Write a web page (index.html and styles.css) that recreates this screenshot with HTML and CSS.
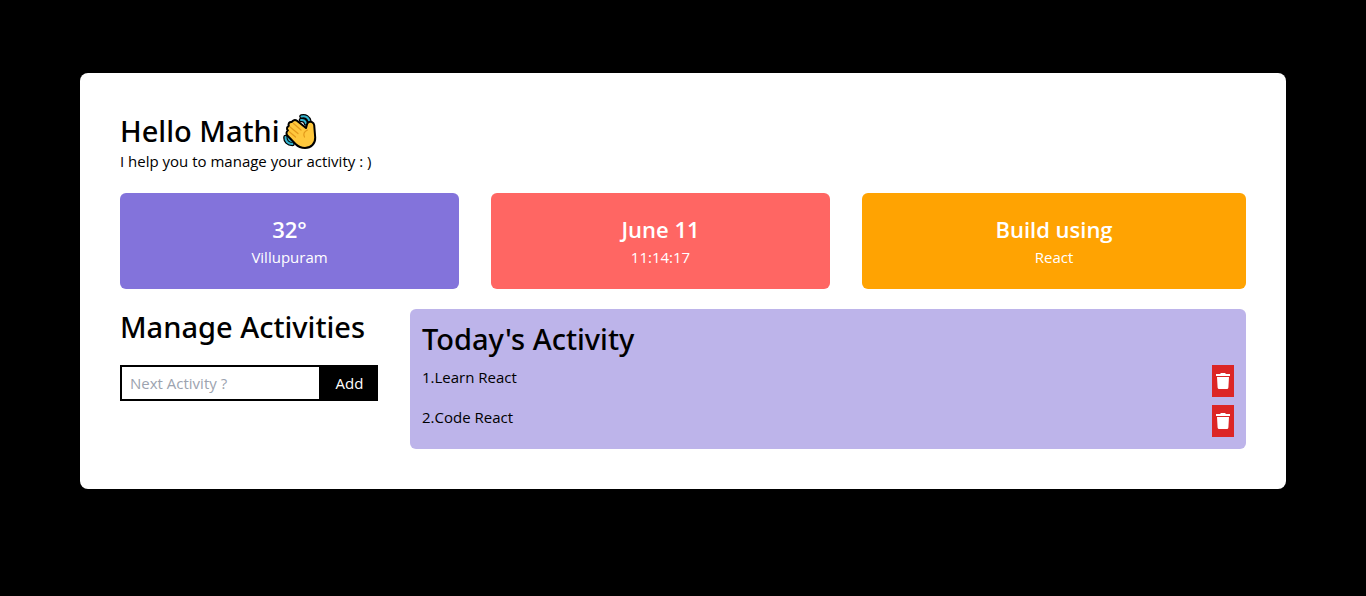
FILE: index.html
```
<!DOCTYPE html>
<html lang="en">
<head>
<meta charset="utf-8">
<meta name="viewport" content="width=device-width, initial-scale=1">
<title>Activity Manager</title>
<link rel="stylesheet" href="styles.css">
</head>
<body>
<svg class="sprite" aria-hidden="true">
  <symbol id="trash" viewBox="0 0 14 16">
    <path fill="currentColor" d="M0 1h4l1-1h4l1 1h4v2H0zM1 4h12l-.6 10.500q-.1 1.500-1.500 1.500H3.100q-1.400 0-1.500-1.500z"/>
  </symbol>
</svg>
<main class="app">
  <header>
    <h1 class="title">Hello Mathi<svg class="wave" viewBox="0 0 34 36" role="img" aria-label="waving hand">
      <g fill="none" stroke-linecap="round" stroke-linejoin="round">
        <path stroke="#000" stroke-width="4.500" d="M18.500 3.500c4-1 7 1 8 5M18 7c2.500-.5 4.500 1 5 3.500M2.500 24c-.5 4 2.500 7 7 7M5.500 24c0 2.500 1.500 4 4.500 4.500"/>
        <path stroke="#35b5d0" stroke-width="2" d="M18.500 3.500c4-1 7 1 8 5M18 7c2.500-.5 4.500 1 5 3.500M2.500 24c-.5 4 2.500 7 7 7M5.500 24c0 2.500 1.500 4 4.500 4.500"/>
      </g>
      <path fill="#ffc83d" stroke="#000" stroke-width="2" stroke-linejoin="round" d="M5 17.500c-2-2-.8-4 .8-4.500-1-2.500.7-4.500 3-4 .7-2 3.500-2.500 5.200-1.300L23 15c1-2.500.5-4.500 2.500-5.800 2.200-1.200 5.300.2 5.700 3l1 12.300c.3 6-4.200 10.500-10.200 10.500-4 0-7-1.500-9.500-4L4.800 23c-1.800-1.700-1.800-4.300.2-5.500z"/>
      <path fill="none" stroke="#e39a1c" stroke-width="1.200" stroke-linecap="round" d="M6 18.500l6.500 5.500M7 14l8 6.500M10.500 10.500l7.500 6.500M24.500 17c-3.500 1.500-4.500 4-3 7"/>
    </svg></h1>
    <p class="subtitle">I help you to manage your activity : )</p>
  </header>

  <section class="cards">
    <article class="card card-weather"><h2>32°</h2><p>Villupuram</p></article>
    <article class="card card-date"><h2>June 11</h2><p>11:14:17</p></article>
    <article class="card card-stack"><h2>Build using</h2><p>React</p></article>
  </section>

  <div class="columns">
    <section class="manage">
      <h2 class="title">Manage Activities</h2>
      <form class="add-form">
        <input class="add-input" type="text" placeholder="Next Activity ?" aria-label="Next activity">
        <button class="add-button" type="button">Add</button>
      </form>
    </section>

    <section class="today">
      <h2 class="title">Today's Activity</h2>
      <ul class="list">
        <li class="item"><span>1.Learn React</span><button class="delete" type="button" aria-label="Delete Learn React"><svg class="trash"><use href="#trash"/></svg></button></li>
        <li class="item"><span>2.Code React</span><button class="delete" type="button" aria-label="Delete Code React"><svg class="trash"><use href="#trash"/></svg></button></li>
      </ul>
    </section>
  </div>
</main>
</body>
</html>
```
FILE: styles.css
```
* {
  box-sizing: border-box;
  margin: 0;
  padding: 0;
}

body {
  min-height: 100vh;
  padding: 73px 80px;
  background: #000;
  color: #000;
  font: 400 15px/24px "Segoe UI", "Open Sans", "Noto Sans", sans-serif;
}

.sprite {
  display: none;
}

.app {
  display: flex;
  flex-direction: column;
  gap: 20px;
  padding: 40px;
  border-radius: 8px;
  background: #fff;
}

.title {
  display: flex;
  align-items: center;
  font-family: "Segoe UI", "Noto Sans", "Open Sans", sans-serif;
  font-size: 29px;
  font-weight: 500;
  line-height: 36px;
  white-space: nowrap;
}

.wave {
  width: 34px;
  height: 36px;
  margin-left: 3px;
}

.cards {
  display: grid;
  grid-template-columns: 339fr 339fr 384fr;
  gap: 32px;
}

.card {
  padding: 20px;
  border-radius: 6px;
  color: #fff;
  text-align: center;
}

.card h2 {
  font-size: 22px;
  font-weight: 600;
  line-height: 32px;
}

.card-weather {
  background: #8373db;
}

.card-date {
  background: #ff6663;
}

.card-stack {
  background: #ffa302;
}

.columns {
  display: flex;
  align-items: flex-start;
  gap: 32px;
}

.manage {
  display: flex;
  flex-direction: column;
  gap: 20px;
  flex: 0 0 258px;
  min-width: 0;
}

.add-form {
  display: flex;
}

.add-input {
  flex: 1;
  min-width: 0;
  height: 36px;
  padding: 0 8px;
  border: 2px solid #000;
  background: #fff;
  color: #000;
  font: inherit;
  outline: none;
}

.add-input::placeholder {
  color: #9ca3af;
  opacity: 1;
}

.add-button {
  flex: 0 0 57px;
  border: 0;
  background: #000;
  color: #fff;
  font: inherit;
}

.today {
  display: flex;
  flex-direction: column;
  gap: 8px;
  flex: 1;
  padding: 12px;
  border-radius: 6px;
  background: #bdb4ea;
}

.list {
  display: flex;
  flex-direction: column;
  gap: 8px;
  list-style: none;
}

.item {
  display: flex;
  justify-content: space-between;
}

.delete {
  display: grid;
  place-items: center;
  width: 22px;
  height: 32px;
  border: 0;
  background: #dc2626;
  color: #fff;
}

.trash {
  width: 14px;
  height: 16px;
}
```
